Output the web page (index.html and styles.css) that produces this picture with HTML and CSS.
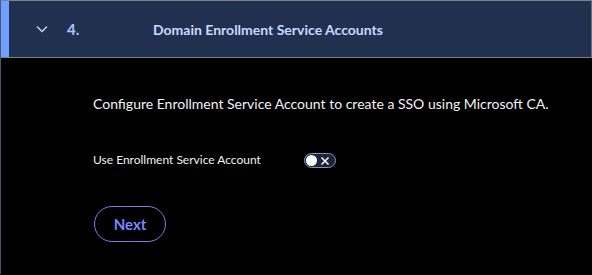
FILE: index.html
```html
<!DOCTYPE html>
<html>
<head>
<meta charset="utf-8">
<link rel="stylesheet" href="styles.css">
</head>
<body>
<div class="panel">
  <div class="header">
    <div class="accent"></div>
    <div class="chev">
      <svg width="12" height="8" viewBox="0 0 12 8"><path d="M1 1.5 L6 6.5 L11 1.5" fill="none" stroke="#c9d2e6" stroke-width="1.5"/></svg>
    </div>
    <div class="num">4.</div>
    <div class="title">Domain Enrollment Service Accounts</div>
  </div>
  <div class="body">
    <p class="desc">Configure Enrollment Service Account to create a SSO using Microsoft CA.</p>
    <div class="row">
      <span class="label">Use Enrollment Service Account</span>
      <span class="toggle"><span class="knob"></span><svg width="10" height="10" viewBox="0 0 10 10"><path d="M1.5 1.5 L8.5 8.5 M8.5 1.5 L1.5 8.5" stroke="#fff" stroke-width="1.5"/></svg></span>
    </div>
    <button class="next">Next</button>
  </div>
</div>
</body>
</html>
```
FILE: styles.css
```css
html, body { margin: 0; padding: 0; background: #000; }
body { font-family: Lato, "Noto Sans", sans-serif; width: 592px; height: 275px; overflow: hidden; }
.panel { border-top: 1px solid #7c808a; border-left: 1px solid #4a5575; height: 274px; box-sizing: border-box; }
.header { display: flex; align-items: center; height: 56px; background: #22304f; border-bottom: 1px solid #7c808a; border-right: 1px solid #6b7180; }
.accent { width: 8px; align-self: stretch; background: #6ea0ff; }
.chev { margin-left: 27px; width: 12px; display: flex; }
.num { margin-left: 19px; width: 88px; color: #a9c7ff; font-weight: 700; font-size: 15px; }
.title { margin-left: -2px; color: #c8daff; font-weight: 700; font-size: 14px; }
.body { padding: 0 0 0 92px; }
.desc { margin: 0; padding-top: 36px; color: #f2f2f2; font-size: 14px; line-height: 20px; }
.row { display: flex; align-items: center; margin-top: 37px; }
.label { color: #f2f2f2; font-size: 12px; width: 211px; }
.toggle { display: inline-flex; align-items: center; gap: 3px; width: 32px; height: 15px; margin-top: 2px; box-sizing: border-box; border: 1px solid #8b94a8; border-radius: 8px; background: #1b2438; padding: 0 2px 0 1px; }
.knob { width: 11px; height: 11px; border-radius: 50%; background: #fff; }
.next { margin-top: 38px; margin-left: 1px; width: 72px; height: 36px; border: 1px solid #7a80e0; border-radius: 18px; background: transparent; color: #7d86ff; font-family: inherit; font-weight: 700; font-size: 15px; }
```
